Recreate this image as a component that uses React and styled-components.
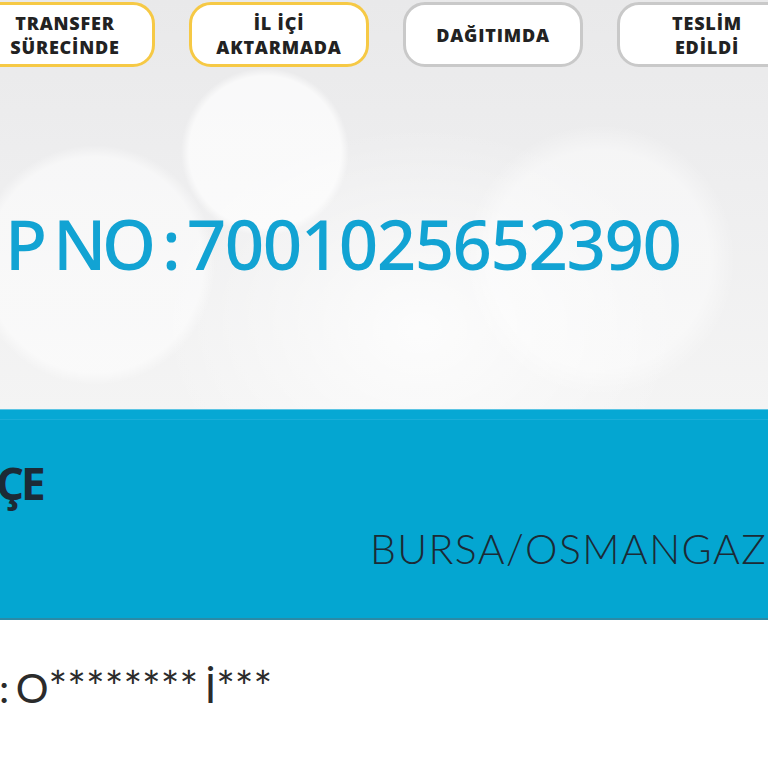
import React from "react";
import styled, { createGlobalStyle } from "styled-components";

const Global = createGlobalStyle`
  html, body { margin: 0; padding: 0; background: #ffffff; overflow: hidden; }
  #root { width: 768px; height: 768px; overflow: hidden; }
`;

const Page = styled.div`
  width: 768px;
  height: 768px;
  display: flex;
  flex-direction: column;
  overflow: hidden;
`;

const Hero = styled.section`
  height: 409px;
  flex: none;
  display: flex;
  flex-direction: column;
  background:
    radial-gradient(circle at 265px 152px, rgba(255,255,255,0.7) 0, rgba(255,255,255,0.7) 76px, rgba(255,255,255,0) 84px),
    radial-gradient(circle at 95px 265px, rgba(255,255,255,0.55) 0, rgba(255,255,255,0.55) 108px, rgba(255,255,255,0) 120px),
    radial-gradient(circle at 600px 260px, rgba(255,255,255,0.45) 0, rgba(255,255,255,0.45) 110px, rgba(255,255,255,0) 135px),
    radial-gradient(ellipse at 420px 330px, rgba(255,255,255,0.8) 0, rgba(255,255,255,0) 260px),
    linear-gradient(180deg, #e9e9ea 0%, #eeeeef 45%, #f4f4f4 100%);
`;

const Steps = styled.div`
  display: flex;
  gap: 34px;
  margin-left: -25px;
  padding-top: 2px;
`;

const Step = styled.div`
  flex: none;
  width: 180px;
  height: 65px;
  box-sizing: border-box;
  border: 3px solid ${p => (p.$active ? "#f6c945" : "#c9c9c9")};
  border-radius: 22px;
  background: #ffffff;
  display: flex;
  align-items: center;
  justify-content: center;
  text-align: center;
  font-family: "Open Sans", "Liberation Sans", sans-serif;
  font-weight: 800;
  font-size: 18px;
  line-height: 24px;
  letter-spacing: 0.8px;
  color: #222222;
`;

const TrackNo = styled.h1`
  margin: 0 0 0 -5px;
  padding: 136px 0 0 0;
  font-family: "Noto Sans", "Open Sans", sans-serif;
  font-weight: 500;
  font-size: 69px;
  line-height: 80px;
  letter-spacing: -1.5px;
  color: #12a3d3;
  white-space: nowrap;
`;

const Prefix = styled.span`
  letter-spacing: -4.5px;
  word-spacing: -3px;
`;

const Offscreen = styled.span`
  display: inline-block;
  width: 0;
  padding-right: ${p => p.$gap || 10}px;
  direction: rtl;
  white-space: nowrap;
`;

const Band = styled.section`
  height: 211px;
  flex: none;
  box-sizing: border-box;
  background: #04a6d1;
  border-top: 1px solid #5cc5e4;
  border-bottom: 2px solid #2b8aa6;
  box-shadow: inset 0 9px 0 #06a8d4, inset 0 10px 0 #1aaed8;
  display: flex;
  flex-direction: column;
  color: #1c2a35;
  white-space: nowrap;
`;

const Label = styled.div`
  padding: 48px 0 0 0;
  margin-left: -16px;
  font-family: "Open Sans", "DejaVu Sans", sans-serif;
  font-weight: 700;
  font-size: 44px;
  line-height: 50px;
  letter-spacing: -3px;
`;

const Value = styled.div`
  padding: 16px 0 0 370px;
  font-family: "Lato", "Open Sans", sans-serif;
  font-weight: 300;
  font-size: 41px;
  line-height: 50px;
  letter-spacing: 1.4px;
`;

const Recipient = styled.div`
  padding: 41px 0 0 0;
  margin-left: -13px;
  font-family: "Lato", "Open Sans", sans-serif;
  font-weight: 400;
  font-size: 41px;
  line-height: 50px;
  word-spacing: -4px;
  color: #2b2b2b;
  white-space: nowrap;
`;

const Stars = styled.span`
  font-size: 44px;
  letter-spacing: 0;
`;

const steps = [
  { lines: ["TRANSFER", "SÜRECİNDE"], active: true },
  { lines: ["İL İÇİ", "AKTARMADA"], active: true },
  { lines: ["DAĞITIMDA"], active: false },
  { lines: ["TESLİM", "EDİLDİ"], active: false },
];

export default function App() {
  return (
    <>
      <Global />
      <Page>
        <Hero>
          <Steps>
            {steps.map((s, i) => (
              <Step key={i} $active={s.active}>
                <div>
                  {s.lines.map((l, j) => (
                    <div key={j}>{l}</div>
                  ))}
                </div>
              </Step>
            ))}
          </Steps>
          <TrackNo>
            <Offscreen $gap={10}>GÖNDERİ TAKİ</Offscreen>
            <Prefix>P NO : </Prefix>7001025652390
          </TrackNo>
        </Hero>
        <Band>
          <Label>
            <Offscreen $gap={12}>İL</Offscreen>ÇE
          </Label>
          <Value>BURSA/OSMANGAZİ</Value>
        </Band>
        <Recipient>
          <Offscreen $gap={12}>ALICI</Offscreen>: O<Stars>********</Stars> İ<Stars>***</Stars>
        </Recipient>
      </Page>
    </>
  );
}
